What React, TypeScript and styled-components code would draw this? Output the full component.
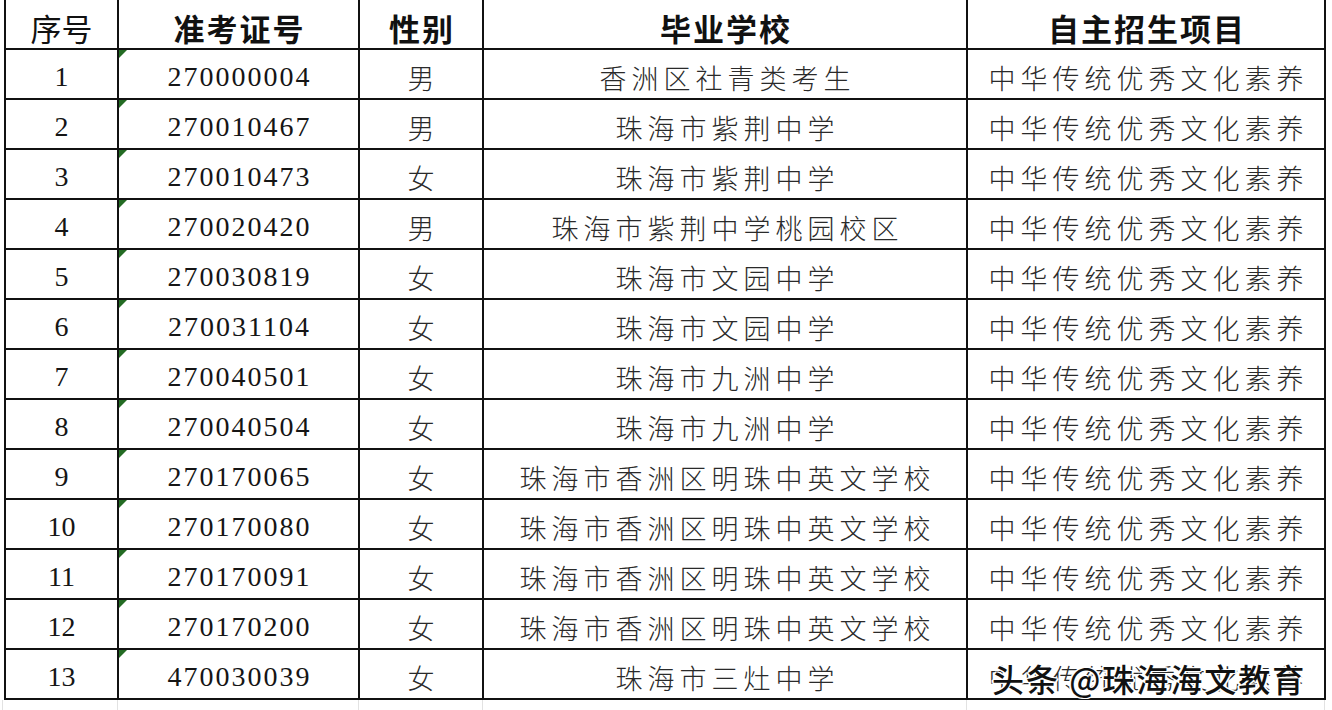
import React from 'react';
import styled, { createGlobalStyle, css } from 'styled-components';

type Row = {
  no: number;
  ticket: string;
  gender: string;
  school: string;
};

const PROJECT = '中华传统优秀文化素养';

const rows: Row[] = [
  { no: 1, ticket: '270000004', gender: '男', school: '香洲区社青类考生' },
  { no: 2, ticket: '270010467', gender: '男', school: '珠海市紫荆中学' },
  { no: 3, ticket: '270010473', gender: '女', school: '珠海市紫荆中学' },
  { no: 4, ticket: '270020420', gender: '男', school: '珠海市紫荆中学桃园校区' },
  { no: 5, ticket: '270030819', gender: '女', school: '珠海市文园中学' },
  { no: 6, ticket: '270031104', gender: '女', school: '珠海市文园中学' },
  { no: 7, ticket: '270040501', gender: '女', school: '珠海市九洲中学' },
  { no: 8, ticket: '270040504', gender: '女', school: '珠海市九洲中学' },
  { no: 9, ticket: '270170065', gender: '女', school: '珠海市香洲区明珠中英文学校' },
  { no: 10, ticket: '270170080', gender: '女', school: '珠海市香洲区明珠中英文学校' },
  { no: 11, ticket: '270170091', gender: '女', school: '珠海市香洲区明珠中英文学校' },
  { no: 12, ticket: '270170200', gender: '女', school: '珠海市香洲区明珠中英文学校' },
  { no: 13, ticket: '470030039', gender: '女', school: '珠海市三灶中学' },
];

const COLS = '113px 241px 124px 484px 358px';

const GlobalStyle = createGlobalStyle`
  html, body {
    margin: 0;
    padding: 0;
    background: #ffffff;
  }
  body {
    width: 1332px;
    height: 710px;
    overflow: hidden;
    font-family: "Noto Sans CJK SC", "Noto Sans", sans-serif;
  }
`;

const Page = styled.div`
  padding-left: 4px;
  width: 1332px;
  height: 710px;
  box-sizing: border-box;
  background: #fff;
`;

const Sheet = styled.div`
  display: grid;
  grid-template-columns: ${COLS};
  border-left: 2px solid #111;
  width: max-content;
`;

const Cell = styled.div<{ $variant?: 'num' | 'ticket' | 'cjk' | 'head' | 'headPlain' }>`
  position: relative;
  box-sizing: border-box;
  height: 50px;
  border-right: 2px solid #111;
  border-bottom: 2px solid #111;
  display: flex;
  align-items: center;
  justify-content: center;
  padding-top: 6px;
  color: #151515;
  white-space: nowrap;

  ${({ $variant }) => {
    switch ($variant) {
      case 'head':
        return css`
          font-family: "Noto Sans CJK SC", sans-serif;
          font-size: 31px;
          font-weight: 700;
          letter-spacing: 2px;
          padding-left: 2px;
          color: #111;
        `;
      case 'headPlain':
        return css`
          font-family: "Noto Sans CJK SC", sans-serif;
          font-size: 31px;
          font-weight: 400;
          color: #111;
        `;
      case 'num':
        return css`
          font-family: "Liberation Serif", "Times New Roman", serif;
          font-size: 28px;
        `;
      case 'ticket':
        return css`
          font-family: "Liberation Serif", "Times New Roman", serif;
          font-size: 28px;
          letter-spacing: 2px;
          padding-left: 2px;

          &::before {
            content: '';
            position: absolute;
            top: 0;
            left: 0;
            border-top: 8px solid #236b23;
            border-right: 8px solid transparent;
          }
        `;
      default:
        return css`
          font-family: "Noto Sans CJK SC", sans-serif;
          font-size: 27px;
          font-weight: 300;
          letter-spacing: 5px;
          padding-left: 5px;
          color: #2a2a2a;
        `;
    }
  }}
`;

const GhostCell = styled.div`
  height: 10px;
  border-right: 1px solid #e2e2e2;
`;

const GhostRow = styled.div`
  display: grid;
  grid-template-columns: ${COLS};
  margin-left: -2px;
  padding-left: 2px;
  border-left: 1px solid #e2e2e2;
  width: max-content;
`;

// site watermark stamped over the last row
const Watermark = styled.span`
  position: absolute;
  left: 24px;
  top: 5px;
  font-family: "Noto Sans CJK SC", sans-serif;
  font-size: 32px;
  font-weight: 500;
  letter-spacing: 2px;
  color: #111;
  text-shadow:
    1px 1px 0 #fff,
    -1px -1px 0 #fff,
    1px -1px 0 #fff,
    -1px 1px 0 #fff,
    2px 0 0 #fff,
    -2px 0 0 #fff;
`;

const App = () => {
  return (
    <>
      <GlobalStyle />
      <Page>
        <Sheet>
          <Cell $variant="headPlain">序号</Cell>
          <Cell $variant="head">准考证号</Cell>
          <Cell $variant="head">性别</Cell>
          <Cell $variant="head">毕业学校</Cell>
          <Cell $variant="head">自主招生项目</Cell>

          {rows.map((row, i) => (
            <React.Fragment key={row.no}>
              <Cell $variant="num">{row.no}</Cell>
              <Cell $variant="ticket">{row.ticket}</Cell>
              <Cell $variant="cjk">{row.gender}</Cell>
              <Cell $variant="cjk">{row.school}</Cell>
              <Cell $variant="cjk">
                {PROJECT}
                {i === rows.length - 1 && <Watermark>头条 @珠海海文教育</Watermark>}
              </Cell>
            </React.Fragment>
          ))}
        </Sheet>
        <GhostRow>
          <GhostCell />
          <GhostCell />
          <GhostCell />
          <GhostCell />
          <GhostCell />
        </GhostRow>
      </Page>
    </>
  );
};

export default App;
